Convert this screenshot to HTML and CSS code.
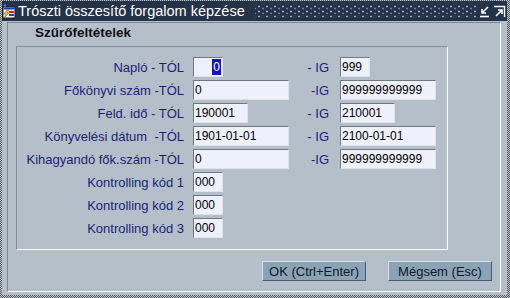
FILE: index.html
```
<!DOCTYPE html>
<html>

<head>
  <title>Tröszti összesítő forgalom képzése</title>
  <link rel="stylesheet" href="styles.css">
</head>

<body>
  <div class="window">
    <div class="titlebar">
      <svg class="app-icon" width="14" height="15" viewBox="0 0 14 15">
        <rect x="1" y="3" width="12" height="11" fill="#f4f4f4" stroke="#202020" stroke-width="1" />
        <rect x="1.5" y="3.5" width="11" height="2" fill="#1c3cb8" />
        <rect x="7" y="7" width="5" height="2" fill="#d02020" />
        <rect x="7" y="10" width="5" height="2" fill="#2040c0" />
        <polygon points="5,6 2,10 4,10 2,14 7,9 5,9 7,6" fill="#f0c800" stroke="#806000" stroke-width="0.5" />
        <circle cx="3" cy="1.5" r="1.2" fill="#5070ff" />
      </svg>
      <span class="title">Trószti összesítő forgalom képzése</span>
      <div class="dots"></div>
      <div class="ctrls">
        <svg width="13" height="13" viewBox="0 0 13 13">
          <path d="M9 2 L3 8 M3 4 L3 8 L7 8" stroke="#fff" stroke-width="1.6" fill="none" />
          <path d="M1 11.5 H10" stroke="#fff" stroke-width="1.6" />
        </svg>
        <svg width="13" height="13" viewBox="0 0 13 13">
          <path d="M1 1.5 H11.5 V12" stroke="#fff" stroke-width="1.4" fill="none" />
          <path d="M3 11 L8.5 5.5 M5 5 L9 5 L9 9" stroke="#fff" stroke-width="1.6" fill="none" />
        </svg>
      </div>
    </div>

    <div class="content">
      <div class="panel">
        <div class="group-title">Szűrőfeltételek</div>
        <div class="group">
          <div class="row">
            <div class="label">Napló - TÓL</div>
            <div class="cell"><div class="field w-xs sel-field"><span class="sel">0</span></div></div>
            <div class="ig">- IG</div>
            <div class="field w-xs">999</div>
          </div>
          <div class="row">
            <div class="label">Főkönyvi szám -TÓL</div>
            <div class="cell"><div class="field w-l">0</div></div>
            <div class="ig">-IG</div>
            <div class="field w-l">999999999999</div>
          </div>
          <div class="row">
            <div class="label">Feld. idő - TÓL</div>
            <div class="cell"><div class="field w-m">190001</div></div>
            <div class="ig">- IG</div>
            <div class="field w-m">210001</div>
          </div>
          <div class="row">
            <div class="label">Könyvelési dátum &nbsp;-TÓL</div>
            <div class="cell"><div class="field w-l">1901-01-01</div></div>
            <div class="ig">- IG</div>
            <div class="field w-l">2100-01-01</div>
          </div>
          <div class="row">
            <div class="label">Kihagyandó fők.szám -TÓL</div>
            <div class="cell"><div class="field w-l">0</div></div>
            <div class="ig">-IG</div>
            <div class="field w-l">999999999999</div>
          </div>
          <div class="row">
            <div class="label">Kontrolling kód 1</div>
            <div class="cell"><div class="field w-xs">000</div></div>
          </div>
          <div class="row">
            <div class="label">Kontrolling kód 2</div>
            <div class="cell"><div class="field w-xs">000</div></div>
          </div>
          <div class="row">
            <div class="label">Kontrolling kód 3</div>
            <div class="cell"><div class="field w-xs">000</div></div>
          </div>
        </div>
        <div class="buttons">
          <button>OK (Ctrl+Enter)</button>
          <button>Mégsem (Esc)</button>
        </div>
      </div>
    </div>
  </div>
</body>

</html>
```

FILE: styles.css
```
html,
body {
  margin: 0;
  padding: 0;
}

body {
  font-family: "Liberation Sans", Arial, sans-serif;
  background: #b5bfc9;
}

.window {
  width: 510px;
  height: 298px;
  box-sizing: border-box;
  padding: 1px 3px 3px 2px;
  background: repeating-conic-gradient(#4c5460 0 25%, #c4c9cf 0 50%) 0 0 / 2px 2px;
}

.titlebar {
  height: 20px;
  background: #25334a;
  display: flex;
  align-items: center;
}

.app-icon {
  flex: none;
  margin-top: 1px;
}

.title {
  color: #fff;
  font-size: 14.5px;
  margin-left: 2px;
  white-space: nowrap;
}

.dots {
  flex: 1;
  height: 14px;
  margin: 0 2px 0 10px;
  background-image:
    radial-gradient(circle, #a4adb8 0.8px, transparent 1.2px),
    radial-gradient(circle, #6f7a89 0.8px, transparent 1.2px);
  background-size: 8px 5px, 8px 5px;
  background-position: 0 0, 4px 2px;
}

.ctrls {
  display: flex;
  gap: 1px;
  margin-right: 1px;
}

.content {
  height: 274px;
  background: #b5bfc9;
  padding: 1px 6px 3px 5px;
  box-sizing: border-box;
}

.panel {
  height: 270px;
  box-sizing: border-box;
  border: 1px solid;
  border-color: #7d8792 #fff #fff #7d8792;
}

.group-title {
  height: 23px;
  box-sizing: border-box;
  padding: 2px 0 0 27px;
  font-size: 13.5px;
  line-height: 15px;
  font-weight: bold;
  color: #101018;
}

.group {
  margin-left: 8px;
  width: 432px;
  height: 204px;
  box-sizing: border-box;
  border: 1px solid;
  border-color: #838c97 #fff #fff #838c97;
  padding-top: 10px;
}

.row {
  display: flex;
  height: 20px;
  margin-bottom: 3px;
  align-items: center;
}

.label {
  width: 167px;
  margin-right: 9px;
  text-align: right;
  font-size: 13px;
  color: #1a1f7a;
  white-space: nowrap;
}

.cell {
  width: 97px;
}

.ig {
  width: 39px;
  margin-right: 11px;
  text-align: right;
  font-size: 13px;
  color: #1a1f7a;
}

.field {
  height: 20px;
  box-sizing: border-box;
  border: 1px solid;
  border-color: #6f7883 #dfe4ea #dfe4ea #6f7883;
  background: #eef0fb;
  font-size: 12px;
  line-height: 18px;
  padding-left: 1px;
  color: #000;
  white-space: nowrap;
  overflow: hidden;
}

.w-xs {
  width: 30px;
}

.w-m {
  width: 55px;
}

.w-l {
  width: 96px;
}

.sel-field {
  display: flex;
  justify-content: flex-end;
  align-items: center;
  padding-right: 1px;
}

.sel {
  background: #1414c0;
  color: #fff;
  height: 16px;
  line-height: 16px;
  padding: 0 1px;
}

.buttons {
  display: flex;
  justify-content: flex-end;
  gap: 22px;
  margin-top: 11px;
  padding-right: 8px;
}

button {
  width: 104px;
  height: 20px;
  padding: 0;
  font-family: "Liberation Sans", Arial, sans-serif;
  font-size: 13px;
  color: #14182a;
  background: #8aa3b7;
  border: 1px solid;
  border-color: #d6dee6 #4e5b68 #4e5b68 #d6dee6;
}
```
